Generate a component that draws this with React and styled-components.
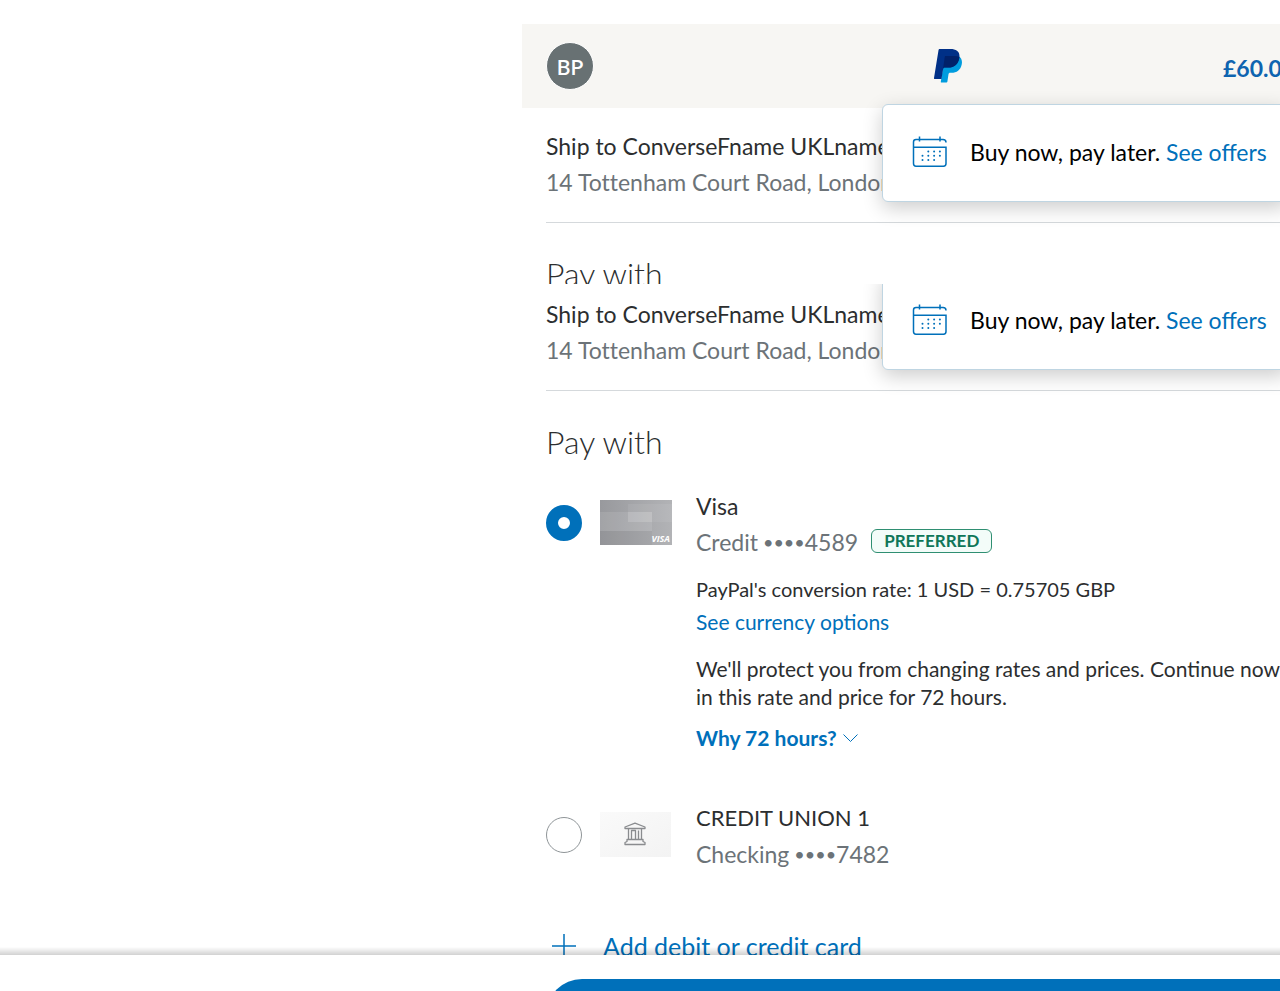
import React from "react";
import styled, { createGlobalStyle } from "styled-components";

const GlobalStyle = createGlobalStyle`
  *, *::before, *::after { box-sizing: border-box; }
  body {
    margin: 0;
    background: #fff;
    color: #2c2e2f;
    font-family: Lato, "Open Sans", sans-serif;
  }
  h2, p { margin: 0; }
  button { font-family: inherit; }
`;

const Page = styled.div`
  height: 100vh;
  overflow: hidden;
  padding: 24px 0 0 522px;
`;

const Summary = styled.section`
  position: relative;
  height: 260px;
  overflow: hidden;
`;

const Details = styled.section`
  position: relative;
  overflow: hidden;
`;

const Header = styled.header`
  display: grid;
  grid-template-columns: 1fr auto 1fr;
  align-items: center;
  min-width: 852px;
  height: 84px;
  padding: 0 24px;
  background: #f7f6f3;
`;

const Avatar = styled.div`
  display: flex;
  align-items: center;
  justify-content: center;
  width: 48px;
  height: 48px;
  border: 1px solid #fff;
  border-radius: 50%;
  background: #687173;
  color: #fff;
  font-size: 21px;
  font-weight: 600;
`;

const Amount = styled.button`
  justify-self: end;
  width: 127px;
  padding: 4px 0 0;
  border: 0;
  background: none;
  color: #0e64b0;
  font-size: 23px;
  font-weight: 700;
  text-align: left;
`;

const Shipping = styled.div`
  margin-left: 24px;
  padding: ${(p) => (p.$compact ? 12 : 20)}px 0 22px;
  border-bottom: 1px solid #d5d9dc;
`;

const Line = styled.p`
  display: flex;
  align-items: center;
  color: ${(p) => (p.$muted ? "#6c7378" : "#2c2e2f")};
  font-size: ${(p) => (p.$caps ? 22 : 23)}px;
  font-variant-ligatures: none;
  line-height: 36px;
  white-space: nowrap;
`;

const Heading = styled.h2`
  padding: 31px 24px 27px;
  font-size: 32px;
  font-weight: 300;
  line-height: 40px;
`;

const Offer = styled.aside`
  position: absolute;
  top: ${(p) => (p.$raised ? -12 : 80)}px;
  left: 360px;
  right: -8px;
  display: flex;
  align-items: center;
  gap: 22px;
  height: 98px;
  padding: 0 0 2px 29px;
  border: 1px solid #bfd5e2;
  border-radius: 6px;
  background: #fff;
  box-shadow: 0 6px 20px rgba(0, 0, 0, 0.2);
  color: #000;
  font-size: 23px;
  white-space: nowrap;
`;

const Link = styled.a`
  color: #0070ba;
  text-decoration: none;
`;

const Methods = styled.div`
  display: flex;
  flex-direction: column;
  gap: 49px;
  padding-left: 24px;
`;

const Method = styled.div`
  display: grid;
  grid-template-columns: 36px 72px 1fr;
  align-items: start;
  column-gap: 18px;
`;

const Radio = styled.input`
  appearance: none;
  width: 36px;
  height: 36px;
  margin: 16px 0 0;
  border: 1px solid #8f9598;
  border-radius: 50%;
  background: #fff;

  &:checked {
    border: 12px solid #0070ba;
  }
`;

const Thumb = styled.svg`
  width: 72px;
  height: 45px;
  margin-top: 11px;
`;

const MethodBody = styled.div`
  margin-top: -1px;
  padding-left: 6px;
`;

const MethodLabel = styled.label`
  display: block;
`;

const Dots = styled.span`
  margin-left: 5px;
  font-size: 18px;
`;

const Badge = styled.span`
  margin: -2px 0 0 13px;
  padding: 0 12px;
  border: 1px solid #2f8f72;
  border-radius: 6px;
  background: #f3fcf9;
  color: #0f7658;
  font-size: 17px;
  font-weight: 700;
  line-height: 22px;
`;

const Rate = styled.p`
  margin-top: 15px;
  font-size: 20px;
  line-height: 28px;
  white-space: nowrap;
`;

const Currency = styled(Link)`
  display: block;
  margin-top: 5px;
  font-size: 21px;
  line-height: 28px;
`;

const Note = styled.p`
  margin-top: 19px;
  font-size: 21px;
  line-height: 28px;
  white-space: nowrap;
`;

const Why = styled.button`
  display: flex;
  align-items: center;
  gap: 6px;
  margin-top: 13px;
  padding: 0;
  border: 0;
  background: none;
  color: #0070ba;
  font-size: 21px;
  font-weight: 700;
  line-height: 28px;
`;

const AddCard = styled(Link)`
  display: flex;
  align-items: center;
  gap: 27px;
  margin-top: 56px;
  padding-left: 30px;
  font-size: 25px;
  line-height: 36px;
`;

const Footer = styled.footer`
  position: fixed;
  left: 0;
  right: 0;
  bottom: 0;
  height: 36px;
  padding: 24px 0 0 546px;
  background: #fff;
  clip-path: inset(-12px 0 0 0);

  &::before {
    content: "";
    position: absolute;
    left: 0;
    right: 0;
    bottom: 100%;
    height: 8px;
    background: linear-gradient(rgba(0, 0, 0, 0), rgba(0, 0, 0, 0.18));
  }
`;

const PayButton = styled.button`
  display: block;
  width: 100%;
  min-width: 804px;
  height: 72px;
  border: 0;
  border-radius: 36px;
  background: #0070ba;
`;

function PayPalLogo() {
  return (
    <svg width="28" height="34" viewBox="0 0 28 34" role="img" aria-label="PayPal">
      <path fill="#009cde" d="M25 7.500C27.500 9 28.500 12 27.700 15.400C26.500 21 22.800 23.800 17.500 23.800H16.100C15.300 23.800 14.700 24.400 14.500 25.200L13.400 32.500C13.300 33.200 12.800 33.600 12.100 33.600H7.500C7 33.600 6.700 33.200 6.800 32.700L10 12Z" />
      <path fill="#003087" d="M5.800 0H16.500C22.500 0 26.300 2.600 25.300 9C24.400 15.200 20.400 18.600 14 18.600H10.700C9.900 18.600 9.300 19.200 9.100 20L7.500 30H.8C.3 30-.1 29.600 0 29.100L4.500 1.200C4.600.5 5.100 0 5.800 0Z" />
      <path fill="#012169" d="M11.700 7.100H20C22 7 23.800 7.200 25.400 8C24.600 15 20.400 18.600 14 18.600H10.700C9.900 18.600 9.300 19.200 9.100 20L8.500 23.500L10.700 8.300C10.800 7.600 11.200 7.100 11.700 7.100Z" />
    </svg>
  );
}

function Calendar() {
  const dots = [];
  for (let row = 0; row < 3; row += 1) {
    for (let col = 0; col < 4; col += 1) {
      if (!(row === 0 && col === 0) && !(row === 2 && col === 3)) {
        dots.push(<circle key={`${row}-${col}`} cx={10.5 + col * 5.8} cy={15.5 + row * 4.2} r="1" />);
      }
    }
  }
  return (
    <svg width="36" height="32" viewBox="0 0 36 32" fill="#0070ba" aria-hidden="true">
      <g fill="none" stroke="#0070ba" strokeWidth="1.500">
        <path d="M34 6.500Q34 3.500 31 3.500H4Q1.500 3.500 1.500 6V27.500Q1.500 30.200 4 30.200H31.500Q34 30.200 34 27.500V11.300H1.500M7.500 .5V5.500M28 .5V5.500" />
      </g>
      {dots}
    </svg>
  );
}

function VisaCard() {
  return (
    <Thumb viewBox="0 0 72 45" role="img" aria-label="Visa card">
      <defs>
        <linearGradient id="silver" x1="0" y1="0" x2="1" y2="0">
          <stop offset="0" stopColor="#98999d" />
          <stop offset="1" stopColor="#b2b3b6" />
        </linearGradient>
      </defs>
      <rect width="72" height="45" fill="url(#silver)" />
      <rect x="28" y="4" width="44" height="18" fill="#fff" opacity=".07" />
      <rect y="12" width="52" height="19" fill="#fff" opacity=".1" />
      <rect x="28" y="12" width="24" height="10" fill="#fff" opacity=".1" />
      <rect y="31" width="52" height="14" fill="#000" opacity=".03" />
      <text x="70" y="42" textAnchor="end" fill="#fff" fontFamily="Open Sans, sans-serif" fontSize="9" fontStyle="italic" fontWeight="700">VISA</text>
    </Thumb>
  );
}

function BankCard() {
  return (
    <Thumb viewBox="0 0 72 45" aria-hidden="true">
      <defs>
        <linearGradient id="pale" x1="0" y1="0" x2="1" y2="1">
          <stop offset="0" stopColor="#fafafa" />
          <stop offset="1" stopColor="#f3f3f3" />
        </linearGradient>
      </defs>
      <rect width="71" height="45" fill="url(#pale)" />
      <g fill="none" stroke="#8a8c8f" strokeWidth="1.300" strokeLinejoin="round">
        <path d="M25 16.500V15L35 11.200L45 15V16.500ZM28.500 16.500V27.500M31.500 27.500V18.500H35.500V27.500M38.500 27.500V18.500M41.500 16.500V27.500M27 27.500H43V29.500L45 30.500V32.500H25V30.500L27 29.500Z" />
      </g>
    </Thumb>
  );
}

function OfferCard({ raised }) {
  return (
    <Offer $raised={raised}>
      <Calendar />
      <span>Buy now, pay later. <Link href="#offers">See offers</Link></span>
    </Offer>
  );
}

function ShipTo({ compact }) {
  return (
    <Shipping $compact={compact}>
      <Line>Ship to ConverseFname UKLname</Line>
      <Line $muted>14 Tottenham Court Road, London</Line>
    </Shipping>
  );
}

export default function App() {
  return (
    <Page>
      <GlobalStyle />
      <Summary>
        <Header>
          <Avatar>BP</Avatar>
          <PayPalLogo />
          <Amount type="button">£60.00</Amount>
        </Header>
        <ShipTo />
        <Heading>Pay with</Heading>
        <OfferCard />
      </Summary>
      <Details>
        <ShipTo compact />
        <Heading>Pay with</Heading>
        <Methods>
          <Method>
            <Radio type="radio" name="method" id="visa" defaultChecked />
            <VisaCard />
            <MethodBody>
              <MethodLabel htmlFor="visa">
                <Line as="span">Visa</Line>
                <Line as="span" $muted>Credit<Dots>••••</Dots>4589<Badge>PREFERRED</Badge></Line>
              </MethodLabel>
              <Rate>PayPal's conversion rate: 1 USD = 0.75705 GBP</Rate>
              <Currency href="#currency">See currency options</Currency>
              <Note>
                We'll protect you from changing rates and prices. Continue now<br />
                in this rate and price for 72 hours.
              </Note>
              <Why type="button">
                Why 72 hours?
                <svg width="15" height="9" viewBox="0 0 15 9" fill="none" stroke="#0070ba" aria-hidden="true">
                  <path d="M.5 .5L7.500 7.500L14.500 .5" />
                </svg>
              </Why>
            </MethodBody>
          </Method>
          <Method>
            <Radio type="radio" name="method" id="bank" />
            <BankCard />
            <MethodBody>
              <MethodLabel htmlFor="bank">
                <Line as="span" $caps>CREDIT UNION 1</Line>
                <Line as="span" $muted>Checking<Dots>••••</Dots>7482</Line>
              </MethodLabel>
            </MethodBody>
          </Method>
        </Methods>
        <AddCard href="#add">
          <svg width="24" height="24" viewBox="0 0 24 24" fill="none" stroke="currentColor" strokeWidth="1.500" aria-hidden="true">
            <path d="M12 0V24M0 12H24" />
          </svg>
          Add debit or credit card
        </AddCard>
        <OfferCard raised />
      </Details>
      <Footer>
        <PayButton type="button" aria-label="Continue" />
      </Footer>
    </Page>
  );
}
